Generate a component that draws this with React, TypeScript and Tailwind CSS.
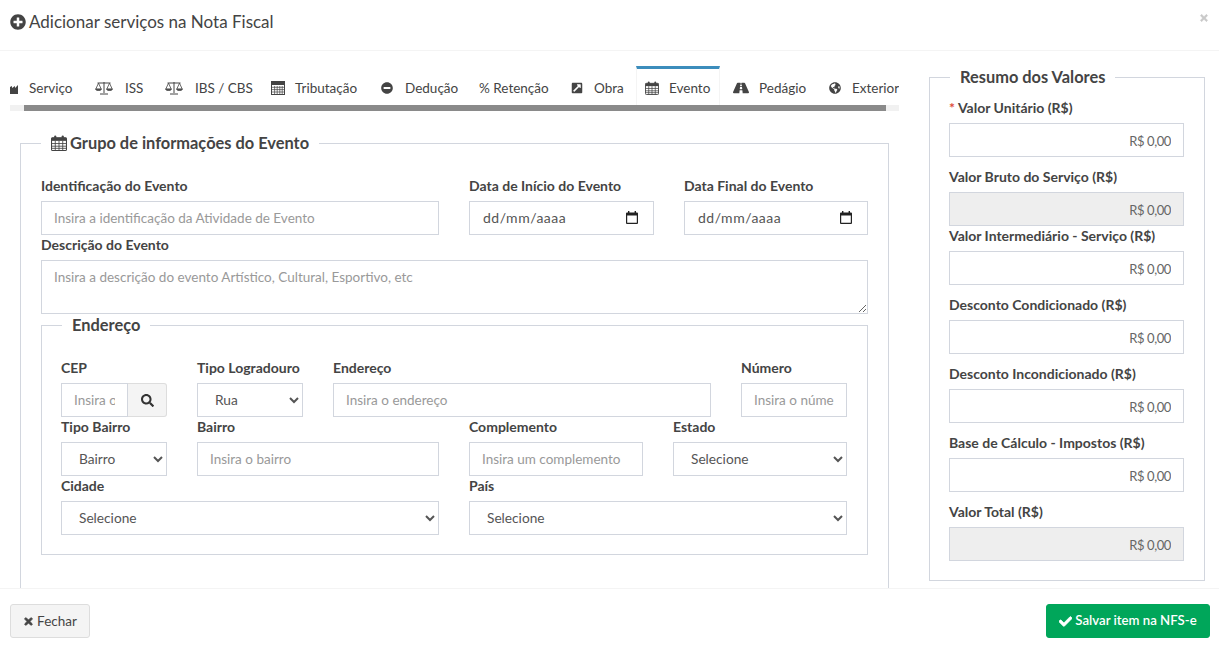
import React from "react";
import { FaPlusCircle, FaMinusCircle, FaExternalLinkSquareAlt, FaRoad, FaGlobeAmericas, FaTimes, FaCheck, FaSearch } from "react-icons/fa";

const CalendarIcon = ({ className }: { className?: string }) => (
  <svg viewBox="0.5 0.500 15 15" className={className} fill="none">
    <rect x="1" y="3" width="14" height="12" rx="1" stroke="currentColor" strokeWidth="1" />
    <rect x="1" y="3" width="14" height="3" fill="currentColor" />
    <path d="M1 8.5h14M1 11h14M1 13h14M4.5 6v9M8 6v9M11.5 6v9" stroke="currentColor" strokeWidth="0.8" />
    <rect x="3.5" y="1" width="2" height="4" rx="1" fill="currentColor" />
    <rect x="10.5" y="1" width="2" height="4" rx="1" fill="currentColor" />
  </svg>
);
const ScaleIcon = ({ className }: { className?: string }) => (
  <svg viewBox="0 0 18 14" className={className} fill="none" stroke="currentColor" strokeWidth="0.8">
    <path d="M9 1v11M5 13h8M2.5 2h13" strokeWidth="1" />
    <path d="M3.5 2.2 0.8 8h5.4zM14.5 2.2 11.8 8h5.4z" />
    <path d="M0.5 8.3c.5 1.6 5.5 1.6 6 0zM11.5 8.3c.5 1.6 5.5 1.6 6 0z" fill="currentColor" />
  </svg>
);
const CalcIcon = ({ className }: { className?: string }) => (
  <svg viewBox="0 0 14 14" className={className} fill="none" stroke="currentColor">
    <rect x="0.5" y="0.5" width="13" height="13" strokeWidth="1" />
    <rect x="1" y="1" width="12" height="3" fill="currentColor" strokeWidth="0" />
    <path d="M1 6.3h12M1 8.6h12M1 11h12M3.6 5v8M6.2 5v8M8.8 5v8M11.2 5v8" strokeWidth="0.7" />
  </svg>
);
const IndustryIcon = ({ className }: { className?: string }) => (
  <svg viewBox="0 0 8 9" className={className} fill="currentColor">
    <path d="M0 2 2 1v2l3-2v2l3-3v9H0z" />
  </svg>
);

const labelCls = "block h-5 mb-[5px] text-[14px] leading-5 font-bold text-[#444] whitespace-nowrap";
const inputCls = "block w-full h-[34px] border border-[#d2d6de] px-3 text-[13.5px] text-[#555] placeholder:text-[#999] outline-none bg-white";
const selectCls = "block w-full h-[34px] border border-[#d2d6de] pl-[13px] pr-3 pb-[2px] text-[13.7px] text-[#555] bg-white outline-none";

const Field = ({ label, span, children }: { label: string; span: string; children: React.ReactNode }) => (
  <div className={span}>
    <label className={labelCls}>{label}</label>
    {children}
  </div>
);

const DateField = () => (
  <div className="flex h-[34px] items-center justify-between border border-[#d2d6de] pb-[2px] pl-[13px] pr-[15px] text-[14px] tracking-[0.5px] text-[#555] bg-white">
    <span>dd/mm/aaaa</span>
    <svg viewBox="0 0 12 13" className="h-[13px] w-3 text-[#222]" fill="currentColor">
      <path d="M2 0h1.4v1.5h5.2V0H10v1.5h1a1 1 0 0 1 1 1V12a1 1 0 0 1-1 1H1a1 1 0 0 1-1-1V2.500a1 1 0 0 1 1-1h1zM1.200 4.500v7.300h9.600V4.500z" />
    </svg>
  </div>
);

const tabs: { label: string; w: string; icon: React.ReactNode; active?: boolean }[] = [
  { label: "Serviço", w: "w-[74px]", icon: <div className="w-2 mr-[11px]"><IndustryIcon className="w-2 h-[9px] mt-[2px]" /></div> },
  { label: "ISS", w: "w-[70px] pl-[11px]", icon: <ScaleIcon className="w-[18px] h-[14px] mr-3" /> },
  { label: "IBS / CBS", w: "w-[106px] pl-[11px]", icon: <ScaleIcon className="w-[18px] h-[14px] mr-[12px]" /> },
  { label: "Tributação", w: "w-[110px] pl-[11px]", icon: <CalcIcon className="w-[14px] h-[14px] mr-[10px]" /> },
  { label: "Dedução", w: "w-[98px] pl-[11px]", icon: <FaMinusCircle className="w-3 h-3 mr-3" /> },
  { label: "% Retenção", w: "w-[92px] pl-[11px]", icon: null },
  { label: "Obra", w: "w-[76px] pl-[11px]", icon: <FaExternalLinkSquareAlt className="w-3 h-3 mr-[11px]" /> },
  { label: "Evento", w: "w-[84px] pl-[8px]", active: true, icon: <CalendarIcon className="w-[14px] h-[14px] mr-[10px]" /> },
  { label: "Pedágio", w: "w-[98px] pl-[13px]", icon: <FaRoad className="w-4 h-4 mr-[10px]" /> },
  { label: "Exterior", w: "w-[90px] pl-[11px]", icon: <FaGlobeAmericas className="w-3 h-3 mr-[11px]" /> },
];

const resumo: { label: string; disabled?: boolean; req?: boolean; mb?: string }[] = [
  { label: "Valor Unitário (R$)", req: true, mb: "mb-[10px]" },
  { label: "Valor Bruto do Serviço (R$)", disabled: true },
  { label: "Valor Intermediário - Serviço (R$)", mb: "mb-[10px]" },
  { label: "Desconto Condicionado (R$)", mb: "mb-[10px]" },
  { label: "Desconto Incondicionado (R$)", mb: "mb-[10px]" },
  { label: "Base de Cálculo - Impostos (R$)", mb: "mb-[10px]" },
  { label: "Valor Total (R$)", disabled: true },
];

export default function App() {
  return (
    <div className="flex h-screen flex-col overflow-hidden bg-white text-[#444] font-['Lato','Liberation_Sans',sans-serif]">
      <header className="flex h-[51px] shrink-0 items-start justify-between border-b border-[#f4f4f4] pl-[10px] pr-[10px]">
        <h1 className="mt-[11px] flex items-center text-[17px] leading-[22px] font-normal text-[#444]">
          <FaPlusCircle className="mr-[3px] h-4 w-4" />
          Adicionar serviços na Nota Fiscal
        </h1>
        <FaTimes className="mt-[13px] h-[10px] w-[10px] stroke-current stroke-[30] text-[#c9c9c9]" />
      </header>

      <main className="flex min-h-0 flex-1 overflow-hidden">
        <div className="ml-[10px] w-[889px] shrink-0 pt-[15px]">
          <div className="flex h-[39px] overflow-hidden">
            {tabs.map((t) => (
              <div
                key={t.label}
                className={`flex shrink-0 items-center whitespace-nowrap text-[13.5px] text-[#444] ${t.w} ${
                  t.active ? "border-x border-t-[3px] border-x-[#f4f4f4] border-t-[#3c8dbc] pt-[2px]" : "pt-[5px]"
                }`}
              >
                {t.icon}
                {t.label}
              </div>
            ))}
          </div>
          <div className="h-[6px] bg-[#f1f1f1] pl-[14px] pr-[13px]">
            <div className="h-full bg-[#8a8a8a]" />
          </div>

          <fieldset className="mx-[10px] mt-[20px] w-[869px] border border-[#d2d6de] px-5 pb-5">
            <legend className="flex h-6 items-center px-[10px] text-[16.4px] font-bold text-[#444]">
              <CalendarIcon className="mr-[3px] h-4 w-4" />
              Grupo de informações do Evento
            </legend>
            <div className="grid grid-cols-[398px_185px_184px] gap-x-[30px] pt-[21px]">
              <Field label="Identificação do Evento" span="">
                <input className={inputCls} placeholder="Insira a identificação da Atividade de Evento" />
              </Field>
              <Field label="Data de Início do Evento" span=""><DateField /></Field>
              <Field label="Data Final do Evento" span=""><DateField /></Field>
              <Field label="Descrição do Evento" span="col-span-3">
                <textarea className="block h-[54px] w-full border border-[#d2d6de] px-3 py-[6px] text-[13.5px] leading-5 text-[#555] outline-none placeholder:text-[#999]" placeholder="Insira a descrição do evento Artístico, Cultural, Esportivo, etc" />
              </Field>
            </div>

            <fieldset className="mt-[-1px] border border-[#d2d6de] pl-[19px] pr-5 pb-[19px]">
              <legend className="ml-[1px] flex h-6 items-center px-[10px] text-[16.4px] font-bold text-[#444]">Endereço</legend>
              <div className="grid grid-cols-12 gap-x-[30px] pt-[21px]">
                <Field label="CEP" span="col-span-2">
                  <div className="flex h-[34px]">
                    <input className="h-[34px] w-[67px] min-w-0 border border-[#d2d6de] px-3 text-[13.5px] outline-none placeholder:text-[#999]" placeholder="Insira o CEP" />
                    <button className="flex w-[39px] items-center justify-center rounded-r-[3px] border border-l-0 border-[#ddd] bg-[#f4f4f4]">
                      <FaSearch className="h-[13px] w-[13px] text-[#333]" />
                    </button>
                  </div>
                </Field>
                <Field label="Tipo Logradouro" span="col-span-2">
                  <select className={selectCls}><option>Rua</option></select>
                </Field>
                <Field label="Endereço" span="col-span-6">
                  <input className={inputCls} placeholder="Insira o endereço" />
                </Field>
                <Field label="Número" span="col-span-2">
                  <input className={inputCls} placeholder="Insira o número" />
                </Field>
                <Field label="Tipo Bairro" span="col-span-2">
                  <select className={selectCls}><option>Bairro</option></select>
                </Field>
                <Field label="Bairro" span="col-span-4">
                  <input className={inputCls} placeholder="Insira o bairro" />
                </Field>
                <Field label="Complemento" span="col-span-3">
                  <input className={inputCls} placeholder="Insira um complemento" />
                </Field>
                <Field label="Estado" span="col-span-3">
                  <select className={selectCls}><option>Selecione</option></select>
                </Field>
                <Field label="Cidade" span="col-span-6">
                  <select className={selectCls}><option>Selecione</option></select>
                </Field>
                <Field label="País" span="col-span-6">
                  <select className={selectCls}><option>Selecione</option></select>
                </Field>
              </div>
            </fieldset>
            <div className="h-[60px]" />
          </fieldset>
        </div>

        <div className="ml-[30px] w-[276px] shrink-0 pt-[14px]">
          <fieldset className="border border-[#d2d6de] pl-[19px] pr-5 pb-[19px]">
            <legend className="ml-[1px] flex h-6 items-center px-[10px] text-[16.4px] font-bold text-[#444]">Resumo dos Valores</legend>
            <div className="pt-[9px]">
              {resumo.map((r) => (
                <div key={r.label} className={r.mb ?? ""}>
                  <label className={labelCls}>
                    {r.req && <span className="mr-[3px] font-bold text-[#dd4b39]">*</span>}
                    {r.label}
                  </label>
                  <input
                    readOnly
                    value="R$ 0,00"
                    className={`block h-[34px] w-full border border-[#d2d6de] px-3 pt-[2px] text-right text-[13px] tracking-[-0.4px] text-[#666] outline-none ${r.disabled ? "bg-[#eee]" : "bg-white"}`}
                  />
                </div>
              ))}
            </div>
          </fieldset>
        </div>
      </main>

      <footer className="flex h-[59px] shrink-0 items-start justify-between border-t border-[#f4f4f4] bg-white pl-[10px] pr-[9px] pt-[15px]">
        <button className="flex h-[34px] w-20 items-center justify-center rounded-[3px] border border-[#ddd] bg-[#f4f4f4] text-[13.5px] text-[#444]">
          <FaTimes className="mr-[3px] h-[11px] w-[11px] stroke-current stroke-[40]" />
          Fechar
        </button>
        <button className="flex h-[34px] w-[164px] items-center justify-center rounded-[3px] border border-[#00a65a] bg-[#00a65a] text-[13.2px] font-semibold text-white">
          <FaCheck className="mr-[3px] h-[13px] w-[13px] stroke-current stroke-[30]" />
          Salvar item na NFS-e
        </button>
      </footer>
    </div>
  );
}
